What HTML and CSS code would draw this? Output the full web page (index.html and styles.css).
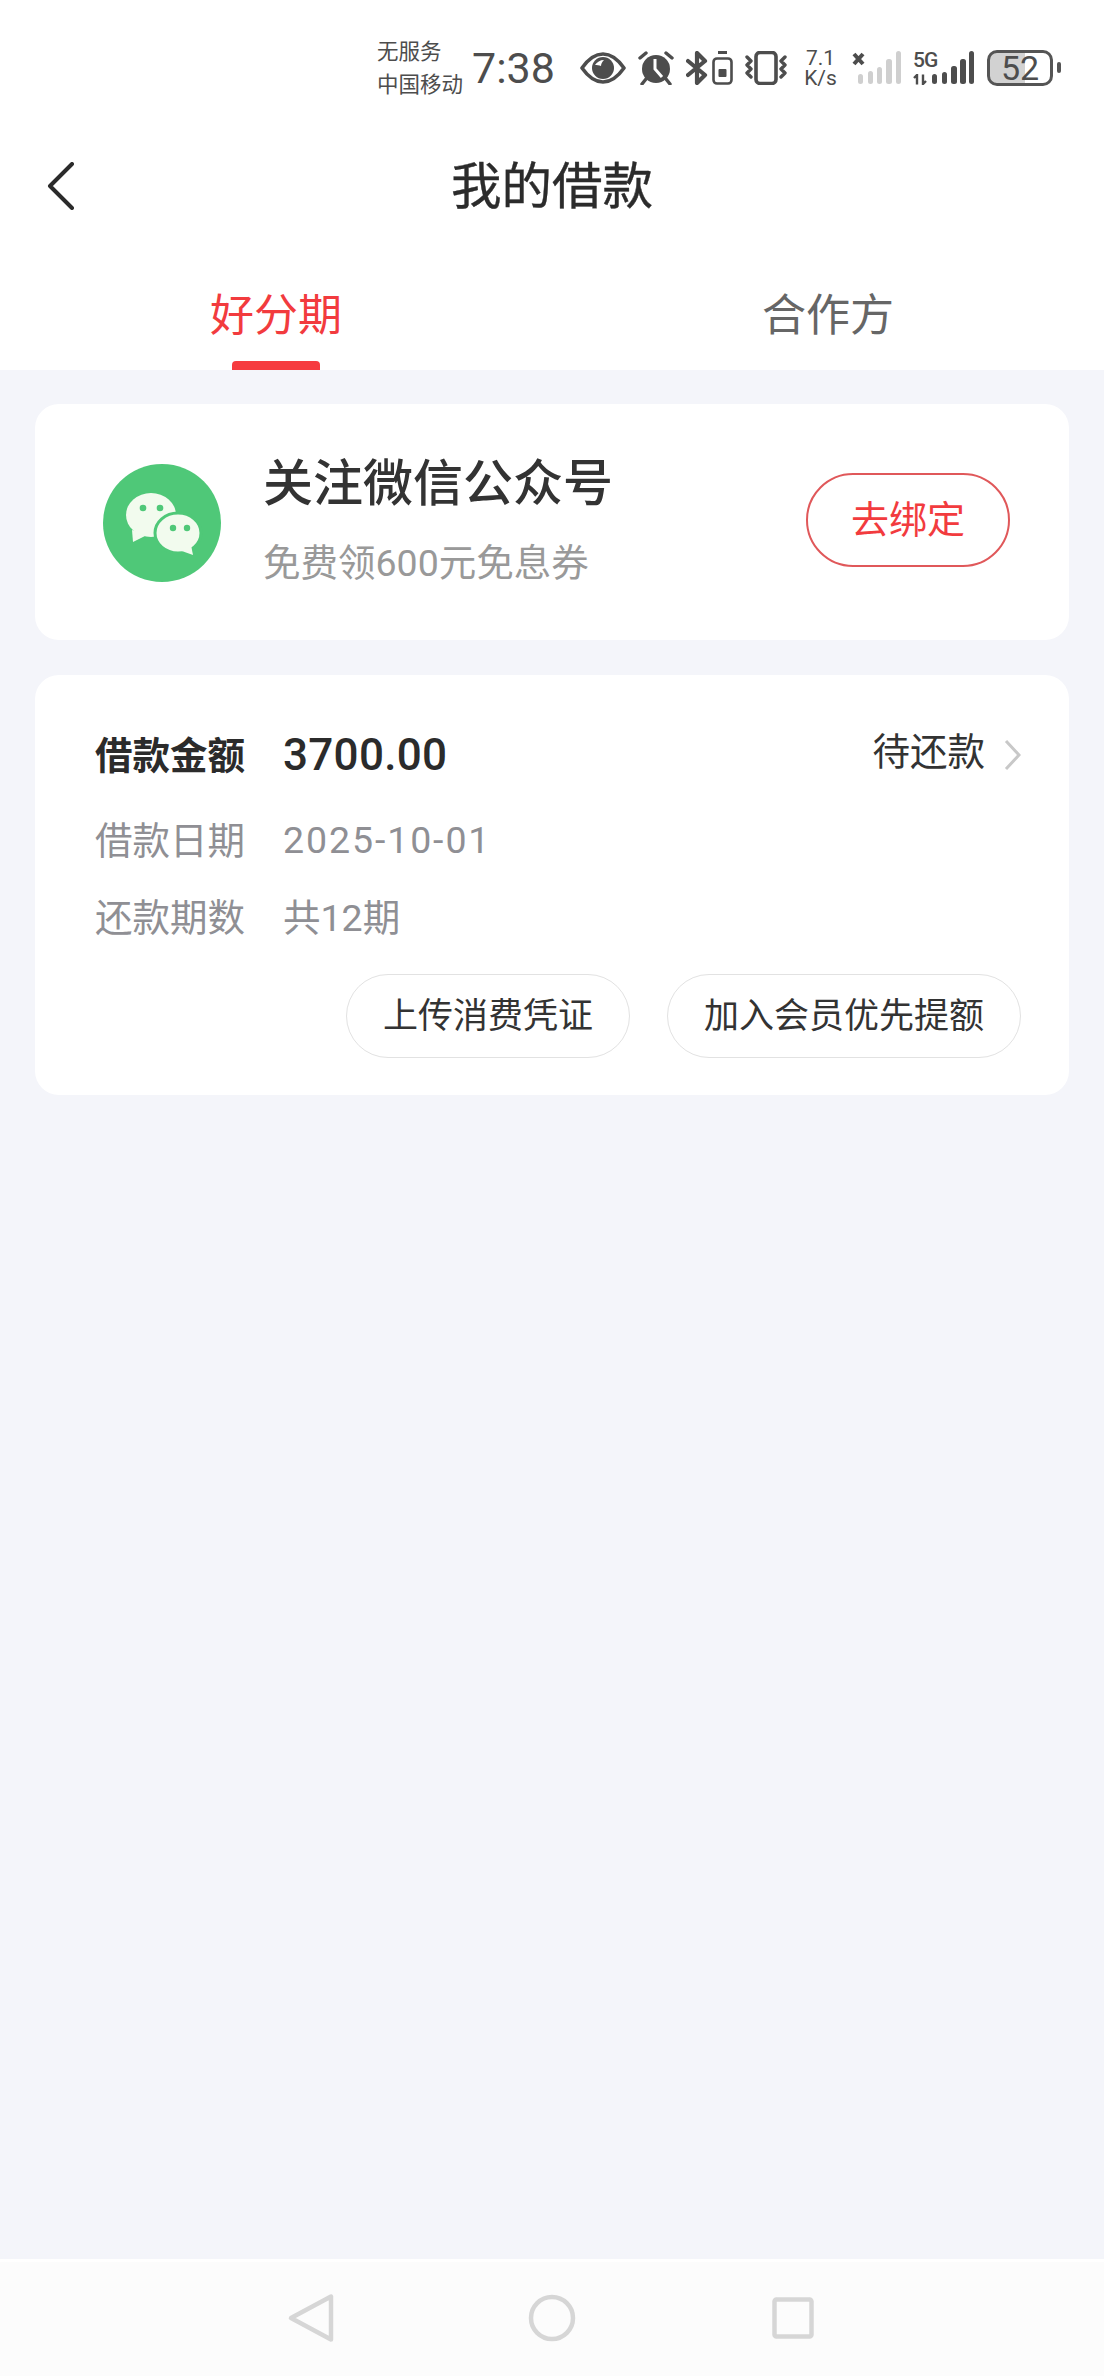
FILE: index.html
```html
<!DOCTYPE html>
<html lang="zh-CN">
<head>
    <meta charset="UTF-8">
    <meta name="viewport" content="width=device-width, initial-scale=1.0">
    <title>我的借款</title>
    <link rel="stylesheet" href="styles.css">
</head>
<body>
    <div class="statusBar">
        <div class="carrier">
            <span>无服务</span>
            <span>中国移动</span>
        </div>
        <span class="clock">7:38</span>

        <!-- eye comfort -->
        <svg class="eyeIcon" width="46" height="32" viewBox="0 0 46 32">
            <path d="M2 16C9 6 16 2 23 2s14 4 21 14c-7 10-14 14-21 14S9 26 2 16z" fill="none" stroke="#4d4d4d" stroke-width="3.6" stroke-linejoin="round"/>
            <circle cx="23" cy="16" r="11" fill="#4d4d4d"/>
            <path d="M15 13c2-3 5-5 9-5-2 2-3 4-3 6-2-1-4-1-6-1z" fill="#fff"/>
        </svg>
        <!-- alarm -->
        <svg class="alarmIcon" width="36" height="34" viewBox="0 0 36 34">
            <circle cx="18" cy="18" r="14" fill="#4d4d4d"/>
            <path d="M17 8v10l7 8" fill="none" stroke="#fff" stroke-width="3"/>
            <path d="M2 7l6-5M34 7l-6-5M8 28l-4 5M28 28l4 5" fill="none" stroke="#4d4d4d" stroke-width="3.4" stroke-linecap="round"/>
        </svg>
        <!-- bluetooth -->
        <svg class="btIcon" width="22" height="34" viewBox="0 0 22 34">
            <path d="M2 10l17 14-8 8V2l8 8L2 24" fill="none" stroke="#4d4d4d" stroke-width="4.2" stroke-linejoin="round" stroke-linecap="round"/>
        </svg>
        <!-- power saving -->
        <svg class="saverIcon" width="21" height="34" viewBox="0 0 21 34">
            <path d="M6 1.5h9" stroke="#4d4d4d" stroke-width="3"/>
            <rect x="1.5" y="7.5" width="18" height="25" rx="3.5" fill="none" stroke="#4d4d4d" stroke-width="2.6"/>
            <rect x="6.5" y="18" width="8" height="8" rx="1" fill="#4d4d4d"/>
        </svg>
        <!-- vibrate -->
        <svg class="vibrateIcon" width="42" height="34" viewBox="0 0 42 34">
            <rect x="11" y="1.5" width="20" height="31" rx="4" fill="none" stroke="#4d4d4d" stroke-width="3.6"/>
            <path d="M2 6l4 4-4 4 4 4-4 4 4 4M40 6l-4 4 4 4-4 4 4 4-4 4" fill="none" stroke="#4d4d4d" stroke-width="3.4" stroke-linecap="round" stroke-linejoin="round"/>
        </svg>

        <div class="netSpeed">
            <span>7.1</span>
            <span>K/s</span>
        </div>

        <!-- sim 1, no service -->
        <svg class="simOne" width="50" height="34" viewBox="0 0 50 34">
            <path d="M2 3l9 10M11 3L2 13" stroke="#4d4d4d" stroke-width="4"/>
            <g fill="#cfcfcf">
                <rect x="6" y="23" width="5" height="10" rx="2.5"/>
                <rect x="16" y="20" width="5" height="13" rx="2.5"/>
                <rect x="25" y="16" width="5" height="17" rx="2.5"/>
                <rect x="34" y="8" width="6" height="25" rx="2.5"/>
                <rect x="44" y="0" width="5" height="33" rx="2.5"/>
            </g>
        </svg>

        <!-- sim 2, 5G -->
        <div class="simTwo">
            <div class="simTag">
                <span class="fiveG">5G</span>
                <svg width="15" height="11" viewBox="0 0 15 11">
                    <path d="M4 10.5V1L1 4M10 .5V10l3-3" fill="none" stroke="#4d4d4d" stroke-width="2.4"/>
                </svg>
            </div>
            <svg width="43" height="34" viewBox="0 0 43 34">
                <g fill="#4d4d4d">
                    <rect x="0" y="23" width="5" height="10" rx="2.5"/>
                    <rect x="10" y="21" width="5" height="12" rx="2.5"/>
                    <rect x="19" y="15" width="6" height="18" rx="2.5"/>
                    <rect x="28" y="8" width="6" height="25" rx="2.5"/>
                    <rect x="37" y="0" width="5" height="33" rx="2.5"/>
                </g>
            </svg>
        </div>

        <div class="battery">52</div>
        <div class="batteryNub"></div>
    </div>

    <header class="navBar">
        <div class="backCell">
            <svg width="28" height="48" viewBox="0 0 28 48">
                <path d="M25 2L3 24l22 22" fill="none" stroke="#2b2b2b" stroke-width="4" stroke-linecap="round" stroke-linejoin="round"/>
            </svg>
        </div>
        <h1 class="pageTitle">我的借款</h1>
    </header>

    <nav class="tabs">
        <div class="tab tabActive">
            <span class="tabLabel">好分期</span>
            <div class="tabLine"></div>
        </div>
        <div class="tab">
            <span class="tabLabel">合作方</span>
        </div>
    </nav>

    <main class="content">
        <section class="card wechatCard">
            <svg class="wechatLogo" width="118" height="118" viewBox="0 0 118 118">
                <circle cx="59" cy="59" r="59" fill="#4fc878"/>
                <path d="M29 66l1 12 14-7z" fill="#f2fbee"/>
                <ellipse cx="48" cy="51" rx="25" ry="22" fill="#f2fbee"/>
                <circle cx="40" cy="44" r="3.3" fill="#4fc878"/>
                <circle cx="57" cy="44" r="3.3" fill="#4fc878"/>
                <ellipse cx="75" cy="69" rx="23" ry="20" fill="#f2fbee" stroke="#4fc878" stroke-width="3"/>
                <path d="M76 86l14 5-2-10z" fill="#f2fbee"/>
                <circle cx="70" cy="64" r="3.2" fill="#4fc878"/>
                <circle cx="84" cy="64" r="3.2" fill="#4fc878"/>
            </svg>
            <div class="wechatText">
                <div class="wechatTitle">关注微信公众号</div>
                <div class="wechatSub">免费领600元免息券</div>
            </div>
            <div class="bindBtn">去绑定</div>
        </section>

        <section class="card loanCard">
            <div class="loanRow loanRowMain">
                <span class="loanLabel">借款金额</span>
                <span class="loanAmount">3700.00</span>
                <div class="loanStatus">
                    <span class="loanStatusText">待还款</span>
                    <svg width="17" height="32" viewBox="0 0 17 32">
                        <path d="M2 2l13 14L2 30" fill="none" stroke="#c8c8c8" stroke-width="3"/>
                    </svg>
                </div>
            </div>
            <div class="loanRow loanRowDate">
                <span class="loanLabel">借款日期</span>
                <span class="loanValue loanDate">2025-10-01</span>
            </div>
            <div class="loanRow">
                <span class="loanLabel">还款期数</span>
                <span class="loanValue loanPeriods">共12期</span>
            </div>
            <div class="loanActions">
                <div class="pillBtn">上传消费凭证</div>
                <div class="pillBtn">加入会员优先提额</div>
            </div>
        </section>
    </main>

    <footer class="sysNav">
        <svg width="50" height="50" viewBox="0 0 50 50">
            <path d="M45 3.5v43L5 25z" fill="none" stroke="#d6d6d6" stroke-width="4.5" stroke-linejoin="round"/>
        </svg>
        <svg width="50" height="50" viewBox="0 0 50 50">
            <circle cx="25" cy="25" r="21" fill="none" stroke="#d6d6d6" stroke-width="4.5"/>
        </svg>
        <svg width="50" height="50" viewBox="0 0 50 50">
            <rect x="6.5" y="6.5" width="37" height="37" rx="2" fill="none" stroke="#d6d6d6" stroke-width="4.5"/>
        </svg>
    </footer>
</body>
</html>
```

FILE: styles.css
```css
* {
    box-sizing: border-box;
}

body {
    margin: 0;
    width: 1104px;
    height: 2376px;
    display: flex;
    flex-direction: column;
    background-color: #F4F5FA;
    color: #333333;
    font-family: Roboto, "Noto Sans CJK SC", sans-serif;
}

/* status bar */
.statusBar {
    height: 135px;
    padding-left: 377px;
    display: flex;
    align-items: center;
    background-color: white;
    color: #4D4D4D;
}

.carrier {
    width: 95px;
    display: flex;
    flex-direction: column;
    font-size: 21.5px;
    line-height: 33px;
    white-space: nowrap;
}

.clock {
    width: 108px;
    font-size: 43px;
    line-height: 50px;
}

.alarmIcon {
    margin-left: 12px;
}

.btIcon {
    margin-left: 12px;
}

.saverIcon {
    margin-left: 4px;
}

.vibrateIcon {
    margin-left: 12px;
}

.netSpeed {
    width: 49px;
    margin-left: 9px;
    display: flex;
    flex-direction: column;
    align-items: center;
    font-size: 21px;
    line-height: 20px;
}

.simOne {
    margin-left: 7px;
}

.simTwo {
    margin-left: 11px;
    display: flex;
    align-items: center;
}

.simTag {
    width: 19px;
    display: flex;
    flex-direction: column;
    align-items: flex-start;
    gap: 4px;
}

.fiveG {
    font-size: 21px;
    line-height: 19px;
    font-weight: 500;
    letter-spacing: -1px;
}

.battery {
    width: 66px;
    height: 36px;
    margin-left: 12px;
    border: 3px solid #555555;
    border-radius: 10px;
    background: linear-gradient(to right, #D2D2D2 58%, transparent 58%);
    font-size: 34px;
    line-height: 30px;
    text-align: center;
}

.batteryNub {
    width: 4px;
    height: 11px;
    margin-left: 4px;
    border-radius: 2px;
    background-color: #555555;
}

/* title row */
.navBar {
    height: 102px;
    display: grid;
    grid-template-columns: 1fr auto 1fr;
    align-items: center;
    background-color: white;
}

.backCell {
    padding-left: 47px;
    display: flex;
}

.pageTitle {
    margin: 0;
    padding-top: 2px;
    font-size: 50.5px;
    font-weight: 400;
    line-height: 60px;
    color: #2B2B2B;
    -webkit-text-stroke: 0.4px #2B2B2B;
}

/* tabs */
.tabs {
    height: 133px;
    display: flex;
    background-color: white;
}

.tab {
    flex: 1;
    padding-top: 49px;
    display: flex;
    flex-direction: column;
    align-items: center;
    color: #666666;
}

.tabLabel {
    font-size: 44px;
    line-height: 60px;
}

.tabActive {
    color: #F23B3E;
}

.tabLine {
    width: 88px;
    height: 9px;
    margin-top: 15px;
    border-radius: 4px 4px 0 0;
    background-color: #F63B3F;
}

/* cards */
.content {
    flex: 1;
    padding: 34px 35px 0;
    display: flex;
    flex-direction: column;
    gap: 35px;
}

.card {
    border-radius: 24px;
    background-color: white;
}

.wechatCard {
    height: 236px;
    padding: 0 59px 0 68px;
    display: flex;
    align-items: center;
}

.wechatLogo {
    flex-shrink: 0;
    margin-top: 2px;
}

.wechatText {
    margin-left: 42px;
    margin-bottom: 2px;
    display: flex;
    flex-direction: column;
    gap: 24px;
}

.wechatTitle {
    font-size: 50px;
    font-weight: 500;
    line-height: 60px;
}

.wechatSub {
    font-size: 37.5px;
    line-height: 50px;
    color: #999999;
}

.bindBtn {
    width: 204px;
    height: 94px;
    margin-left: auto;
    margin-top: -4px;
    border: 2px solid #E0585A;
    border-radius: 47px;
    font-size: 38px;
    line-height: 90px;
    text-align: center;
    color: #F23B3E;
}

.loanCard {
    height: 420px;
    padding: 55px 48px 0 60px;
}

.loanRow {
    height: 50px;
    margin-bottom: 27px;
    display: flex;
    align-items: center;
}

.loanRowMain {
    margin-bottom: 35px;
}

.loanLabel {
    width: 188px;
    padding-bottom: 6px;
    flex-shrink: 0;
    font-size: 37.5px;
    color: #8F8F94;
}

.loanRowMain .loanLabel {
    font-weight: 700;
    color: #2B2B2B;
}

.loanAmount {
    font-size: 44px;
    font-weight: 500;
    letter-spacing: 0.3px;
    color: #2B2B2B;
}

.loanValue {
    font-size: 37.5px;
    color: #8F8F94;
}

.loanDate {
    letter-spacing: 1.9px;
}

.loanPeriods {
    padding-bottom: 6px;
}

.loanStatus {
    margin-left: auto;
    display: flex;
    align-items: center;
    gap: 19px;
    font-size: 37.5px;
}

.loanStatusText {
    padding-bottom: 14px;
}

.loanActions {
    margin-top: 32px;
    display: flex;
    justify-content: flex-end;
    gap: 37px;
}

.pillBtn {
    height: 84px;
    padding: 0 36px;
    border: 1.5px solid #E2E2E2;
    border-radius: 42px;
    font-size: 35px;
    line-height: 84px;
}

/* system navigation */
.sysNav {
    height: 117px;
    padding-bottom: 3px;
    border-top: 3px solid white;
    display: flex;
    justify-content: center;
    align-items: center;
    gap: 191px;
    background-color: #FCFCFC;
}
```
